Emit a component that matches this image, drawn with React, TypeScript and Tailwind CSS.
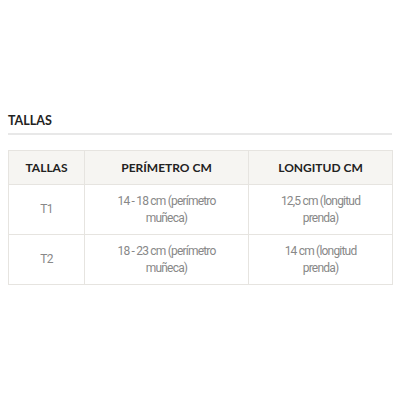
const rows = [
  { talla: "T1", perimetro: "14 - 18 cm (perímetro muñeca)", longitud: "12,5 cm (longitud prenda)" },
  { talla: "T2", perimetro: "18 - 23 cm (perímetro muñeca)", longitud: "14 cm (longitud prenda)" },
];

const headFont = { fontFamily: "Lato, 'Open Sans', sans-serif" };
const bodyFont = { fontFamily: "Roboto, 'Liberation Sans Narrow', sans-serif" };

export default function App() {
  return (
    <div className="w-[400px] h-[400px] bg-white px-2 pt-[112px]">
      <h2 className="text-[12.5px] font-bold text-[#222] leading-[18px]" style={headFont}>
        TALLAS
      </h2>
      <div className="mt-[3px] h-[2px] bg-[#e8e8e8]" />
      <table className="mt-[15px] w-[384px] border-collapse table-fixed">
        <colgroup>
          <col className="w-[76px]" />
          <col className="w-[164px]" />
          <col className="w-[144px]" />
        </colgroup>
        <thead>
          <tr className="h-[34px] bg-[#f6f5f2]">
            {["TALLAS", "PERÍMETRO CM", "LONGITUD CM"].map((h) => (
              <th
                key={h}
                className="border border-[#e6e4e0] text-[12px] font-bold text-[#222] text-center"
                style={headFont}
              >
                {h}
              </th>
            ))}
          </tr>
        </thead>
        <tbody>
          {rows.map((r) => (
            <tr key={r.talla} className="h-[50px]">
              <td className="border border-[#e6e4e0] text-center text-[12px] leading-[17px] tracking-[-0.8px] text-[#888]" style={bodyFont}>
                {r.talla}
              </td>
              <td className="border border-[#e6e4e0] text-center text-[12px] leading-[17px] tracking-[-0.8px] text-[#888] px-[28px]" style={bodyFont}>
                {r.perimetro}
              </td>
              <td className="border border-[#e6e4e0] text-center text-[12px] leading-[17px] tracking-[-0.8px] text-[#888] px-[30px]" style={bodyFont}>
                {r.longitud}
              </td>
            </tr>
          ))}
        </tbody>
      </table>
    </div>
  );
}
